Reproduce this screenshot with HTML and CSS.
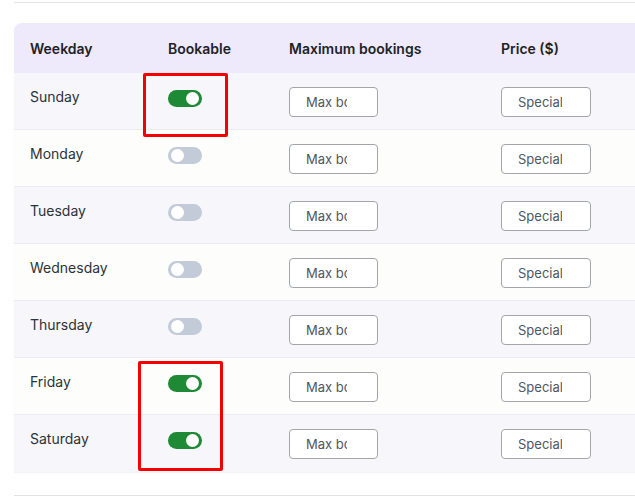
FILE: index.html
```html
<!DOCTYPE html>
<html>
<head>
<meta charset="utf-8">
<link rel="stylesheet" href="styles.css">
</head>
<body>
<div class="page">
  <div class="topline"></div>
  <div class="card">
    <div class="row head">
      <div class="cell">Weekday</div>
      <div class="cell">Bookable</div>
      <div class="cell">Maximum bookings</div>
      <div class="cell">Price ($)</div>
    </div>
    <div class="row odd">
      <div class="cell day">Sunday</div>
      <div class="cell"><span class="toggle on"></span></div>
      <div class="cell"><input class="field" type="text" placeholder="Max bookings"></div>
      <div class="cell"><input class="field price" type="text" placeholder="Special price"></div>
    </div>
    <div class="row even">
      <div class="cell day">Monday</div>
      <div class="cell"><span class="toggle"></span></div>
      <div class="cell"><input class="field" type="text" placeholder="Max bookings"></div>
      <div class="cell"><input class="field price" type="text" placeholder="Special price"></div>
    </div>
    <div class="row odd">
      <div class="cell day">Tuesday</div>
      <div class="cell"><span class="toggle"></span></div>
      <div class="cell"><input class="field" type="text" placeholder="Max bookings"></div>
      <div class="cell"><input class="field price" type="text" placeholder="Special price"></div>
    </div>
    <div class="row even">
      <div class="cell day">Wednesday</div>
      <div class="cell"><span class="toggle"></span></div>
      <div class="cell"><input class="field" type="text" placeholder="Max bookings"></div>
      <div class="cell"><input class="field price" type="text" placeholder="Special price"></div>
    </div>
    <div class="row odd">
      <div class="cell day">Thursday</div>
      <div class="cell"><span class="toggle"></span></div>
      <div class="cell"><input class="field" type="text" placeholder="Max bookings"></div>
      <div class="cell"><input class="field price" type="text" placeholder="Special price"></div>
    </div>
    <div class="row even">
      <div class="cell day">Friday</div>
      <div class="cell"><span class="toggle on"></span></div>
      <div class="cell"><input class="field" type="text" placeholder="Max bookings"></div>
      <div class="cell"><input class="field price" type="text" placeholder="Special price"></div>
    </div>
    <div class="row odd last">
      <div class="cell day">Saturday</div>
      <div class="cell"><span class="toggle on"></span></div>
      <div class="cell"><input class="field" type="text" placeholder="Max bookings"></div>
      <div class="cell"><input class="field price" type="text" placeholder="Special price"></div>
    </div>
    <div class="mark mark-a"></div>
    <div class="mark mark-b"></div>
  </div>
  <div class="bottomline"></div>
</div>
</body>
</html>
```
FILE: styles.css
```css
html, body {
  margin: 0;
  padding: 0;
  background: #ffffff;
  overflow: hidden;
}
body {
  font-family: Inter, "Noto Sans", sans-serif;
  color: #1e2327;
}
.page {
  width: 635px;
  height: 497px;
  padding-left: 14px;
  box-sizing: border-box;
}
.topline {
  margin-top: 2px;
  height: 1px;
  background: #e4e2ec;
  width: 640px;
}
.card {
  position: relative;
  margin-top: 20px;
  width: 640px;
  border-radius: 8px 0 0 0;
  box-shadow: 0 1px 2px rgba(0,0,0,0.06);
}
.row {
  display: grid;
  grid-template-columns: 138px 121px 212px 1fr;
  height: 57px;
  box-sizing: border-box;
  border-bottom: 1px solid #ecebef;
}
.row.last {
  border-bottom: none;
}
.head {
  height: 50px;
  background: #eeeafc;
  border-radius: 8px 0 0 0;
  border-bottom: none;
  align-items: center;
  font-size: 14px;
  font-weight: 600;
  color: #1d2327;
}
.odd { background: #f6f6fb; }
.even { background: #fdfdfb; }
.cell {
  padding-left: 16px;
}
.row:not(.head) .cell {
  padding-top: 14px;
}
.day {
  font-size: 14px;
  line-height: 20px;
  color: #2c3338;
}
.toggle {
  display: block;
  margin-top: 3px;
  width: 34px;
  height: 17px;
  border-radius: 9px;
  background: #c3cbd8;
  position: relative;
}
.toggle::after {
  content: "";
  position: absolute;
  top: 2px;
  left: 3px;
  width: 13px;
  height: 13px;
  border-radius: 50%;
  background: #ffffff;
}
.toggle.on {
  background: #1e8a36;
}
.toggle.on::after {
  left: auto;
  right: 3px;
}
.field {
  display: block;
  box-sizing: border-box;
  width: 89px;
  height: 30px;
  margin: 0;
  padding: 0 30px 0 16px;
  border: 1px solid #a2a6ab;
  border-radius: 4px;
  background: #ffffff;
  font-family: Inter, "Noto Sans", sans-serif;
  font-size: 13px;
  color: #50575e;
  outline: none;
}
.field.price {
  width: 90px;
  padding-right: 28px;
}
.field::placeholder {
  color: #50575e;
  opacity: 1;
}
.mark {
  position: absolute;
  border: 3px solid #f40000;
  border-radius: 2px;
  box-sizing: border-box;
}
.mark-a {
  left: 129px;
  top: 50px;
  width: 85px;
  height: 64px;
}
.mark-b {
  left: 124px;
  top: 338px;
  width: 85px;
  height: 110px;
}
.bottomline {
  margin-top: 23px;
  height: 1px;
  background: #e2e2e2;
  width: 640px;
}
```
